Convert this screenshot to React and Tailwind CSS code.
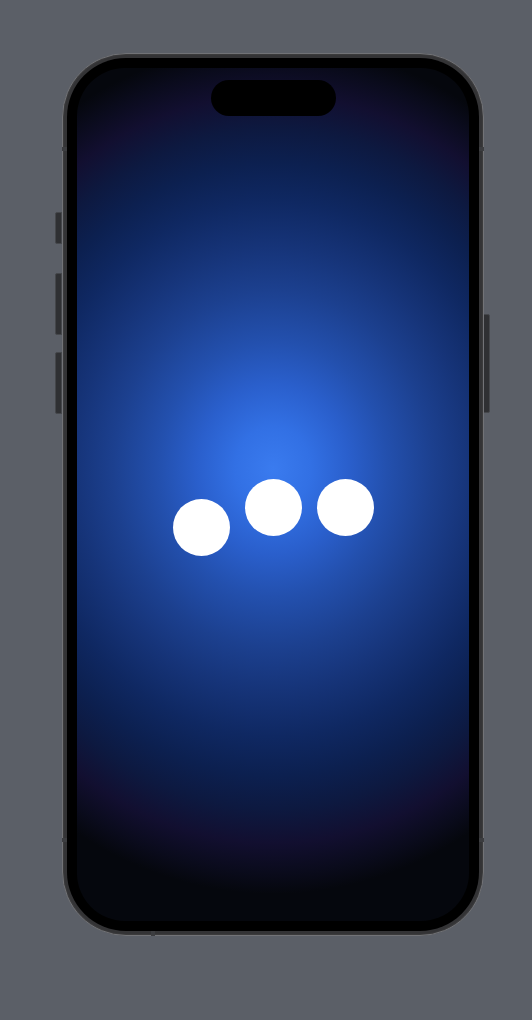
export default function App() {
  return (
    <div className="w-full h-[1020px] bg-[#5b5f67] pt-[53px] pl-[62px]">
      <div className="relative w-[422px] h-[883px]">
        {/* side buttons */}
        <div className="absolute left-[-7px] top-[159px] w-[7px] h-[32px] rounded-l-[2px] bg-[#2f3033] border border-[#45474b]" />
        <div className="absolute left-[-7px] top-[220px] w-[7px] h-[62px] rounded-l-[2px] bg-[#2f3033] border border-[#45474b]" />
        <div className="absolute left-[-7px] top-[299px] w-[7px] h-[62px] rounded-l-[2px] bg-[#2f3033] border border-[#45474b]" />
        <div className="absolute right-[-6px] top-[261px] w-[7px] h-[99px] rounded-r-[2px] bg-[#2f3033] border border-[#45474b]" />

        <div className="relative w-full h-full rounded-[64px] bg-[#333335] border border-[#727377] p-[4px] shadow-[inset_0_0_2px_rgba(255,255,255,0.15)]">
          {/* antenna bands */}
          <div className="absolute left-[-1px] top-[93px] w-[5px] h-[4px] bg-[#3c3d40]" />
          <div className="absolute right-[-1px] top-[93px] w-[5px] h-[4px] bg-[#3c3d40]" />
          <div className="absolute left-[-1px] bottom-[93px] w-[5px] h-[4px] bg-[#3c3d40]" />
          <div className="absolute right-[-1px] bottom-[93px] w-[5px] h-[4px] bg-[#3c3d40]" />
          <div className="absolute left-[88px] bottom-[-1px] w-[4px] h-[5px] bg-[#3c3d40]" />

          <div className="w-full h-full rounded-[59px] bg-black p-[10px]">
            <div className="w-full h-full rounded-[48px] overflow-hidden flex flex-col items-center pt-[12px] bg-[radial-gradient(ellipse_380px_425px_at_50%_47%,#3a7bef_0%,#3270e4_10%,#2a5fcc_20%,#2350ae_30%,#1c408f_42%,#163479_52%,#0f2862_63%,#0c2050_72%,#0d1940_80%,#120f30_88%,#0a0b1c_95%,#05070d_100%)]">
              <div className="w-[125px] h-[36px] rounded-full bg-black" />
              <div className="mt-[363px] flex items-start gap-[15px]">
                <div className="mt-[20px] w-[57px] h-[57px] rounded-full bg-white" />
                <div className="w-[57px] h-[57px] rounded-full bg-white" />
                <div className="w-[57px] h-[57px] rounded-full bg-white" />
              </div>
            </div>
          </div>
        </div>
      </div>
    </div>
  );
}
